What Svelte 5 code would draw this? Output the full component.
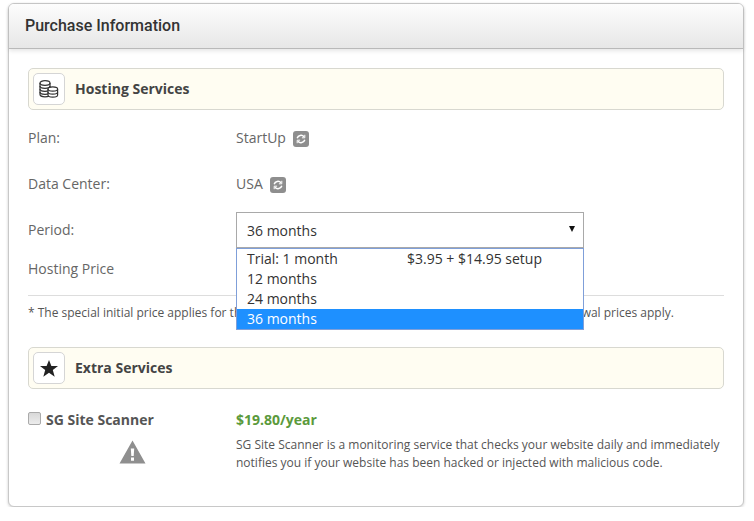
<script>
  let months = [
    { label: 'Trial: 1 month', price: '$3.95 + $14.95 setup' },
    { label: '12 months' },
    { label: '24 months' },
    { label: '36 months', active: true }
  ];
</script>

<div class="card">
  <div class="card-head">Purchase Information</div>
  <div class="card-body">
    <div class="section">
      <span class="section-icon">
        <svg width="20" height="18" viewBox="0 0 20 18" fill="#fff" stroke="#333" stroke-width="1.2">
          <path d="M1 3c0-1.300 2.300-2.300 5-2.300s5 1 5 2.300v11.500c0 1.300-2.300 2.300-5 2.300s-5-1-5-2.300z" />
          <path fill="none" d="M1 3c0 1.300 2.300 2.300 5 2.300s5-1 5-2.300M1 6c0 1.300 2.300 2.300 5 2.300s5-1 5-2.300M1 9c0 1.300 2.300 2.300 5 2.300s5-1 5-2.300M1 12c0 1.300 2.300 2.300 5 2.300s5-1 5-2.300" />
          <path d="M9 9c0-1.200 2.100-2.100 4.800-2.100s4.800.9 4.800 2.100v6c0 1.200-2.100 2.100-4.800 2.100S9 16.200 9 15z" />
          <path fill="none" d="M9 9c0 1.200 2.100 2.100 4.800 2.100s4.800-.9 4.800-2.100M9 12c0 1.200 2.100 2.100 4.800 2.100s4.800-.9 4.800-2.100" />
        </svg>
      </span>
      <h3>Hosting Services</h3>
    </div>

    <div class="row plan-row">
      <div class="label">Plan:</div>
      <div class="value">StartUp <span class="swap"><svg width="10" height="10" viewBox="0 0 10 10" fill="none" stroke="#fff" stroke-width="1.500"><path d="M1.200 4.200A3.900 3.900 0 0 1 8 2.800M8.800 5.800A3.900 3.900 0 0 1 2 7.200" /><path d="M8.800 .8v3H5.900M1.200 9.200v-3h2.900" stroke-width="1" /></svg></span></div>
    </div>
    <div class="row dc-row">
      <div class="label">Data Center:</div>
      <div class="value">USA <span class="swap"><svg width="10" height="10" viewBox="0 0 10 10" fill="none" stroke="#fff" stroke-width="1.500"><path d="M1.200 4.200A3.900 3.900 0 0 1 8 2.800M8.800 5.800A3.900 3.900 0 0 1 2 7.200" /><path d="M8.800 .8v3H5.900M1.200 9.200v-3h2.900" stroke-width="1" /></svg></span></div>
    </div>
    <div class="row period-row">
      <div class="label">Period:</div>
      <div class="select-wrap">
        <div class="select">36 months<span class="arrow"></span></div>
        <ul class="menu">
          {#each months as m}
            <li class:active={m.active}><span class="m-label">{m.label}</span>{#if m.price}<span>{m.price}</span>{/if}</li>
          {/each}
        </ul>
      </div>
    </div>
    <div class="row price-row">
      <div class="label small">Hosting Price</div>
    </div>
    <p class="note">* The special initial price applies for the first invoice only. After that initial period, the standard renewal prices apply.</p>

    <div class="section extra">
      <span class="section-icon">
        <svg width="18" height="17" viewBox="0 0 18 17"><path fill="#222" d="M9 0l2.400 6H18l-5.200 4 1.900 6.700L9 12.800l-5.700 3.900L5.200 10 0 6h6.600z" /></svg>
      </span>
      <h3>Extra Services</h3>
    </div>

    <div class="scanner">
      <div class="scanner-left">
        <label><input type="checkbox" /> SG Site Scanner</label>
        <svg class="warn" width="27" height="24" viewBox="0 0 27 24"><path fill="#8f8f8f" fill-rule="evenodd" d="M13.500 0.500L26.500 23.500H.5zM11.800 8.500l.5 7.500h2.400l.5-7.500zM12 17.500v3.200h3v-3.200z" /></svg>
      </div>
      <div class="scanner-right">
        <div class="price">$19.80/year</div>
        <p>SG Site Scanner is a monitoring service that checks your website daily and immediately notifies you if your website has been hacked or injected with malicious code.</p>
      </div>
    </div>
  </div>
</div>

<style>
  :global(body) {
    margin: 0;
    background: #fff;
    font-family: "Open Sans", sans-serif;
    color: #555;
  }

  .card {
    box-sizing: border-box;
    width: 736px;
    height: 504px;
    margin: 3px 0 0 8px;
    border: 1px solid #c8c8c8;
    border-radius: 6px;
    box-shadow: 0 1px 3px rgba(0, 0, 0, 0.2);
    background: #fff;
  }

  .card-head {
    box-sizing: border-box;
    height: 45px;
    padding: 12px 16px 0;
    border-bottom: 1px solid #b9b9b9;
    border-radius: 5px 5px 0 0;
    background: linear-gradient(#fdfdfd, #e7e7e7);
    box-shadow: 0 2px 4px rgba(0, 0, 0, 0.1);
    font-family: Roboto, sans-serif;
    font-size: 16px;
    font-weight: 500;
    line-height: 20px;
    color: #333;
  }

  .card-body {
    padding: 19px 19px 0;
  }

  .section {
    box-sizing: border-box;
    display: flex;
    align-items: center;
    height: 42px;
    padding-left: 4px;
    border: 1px solid #d8d8d0;
    border-radius: 5px;
    background: #fffdf2;
  }

  .section h3 {
    margin: 0 0 2px 10px;
    font-size: 14px;
    font-weight: 700;
    color: #444;
  }

  .section-icon {
    box-sizing: border-box;
    display: flex;
    align-items: center;
    justify-content: center;
    width: 32px;
    height: 32px;
    border: 1px solid #d5d5d5;
    border-radius: 5px;
    background: #fff;
  }

  .row {
    display: flex;
    align-items: center;
    font-size: 14px;
    line-height: 20px;
    color: #666;
  }

  .label {
    width: 208px;
  }

  .plan-row {
    margin-top: 18px;
  }

  .dc-row {
    margin-top: 26px;
  }

  .period-row {
    margin-top: 18px;
  }

  .price-row {
    margin-top: 11px;
  }

  .value {
    display: flex;
    align-items: center;
    gap: 7px;
  }

  .swap {
    display: flex;
    align-items: center;
    justify-content: center;
    width: 16px;
    height: 16px;
    margin-top: 2px;
    border-radius: 3px;
    background: #8e8e8e;
  }

  .select-wrap {
    position: relative;
    width: 348px;
  }

  .select {
    box-sizing: border-box;
    position: relative;
    height: 36px;
    padding: 8px 10px;
    border: 1px solid #a9a9a9;
    color: #333;
  }

  .arrow {
    position: absolute;
    top: 13px;
    right: 8px;
    border-top: 6px solid #111;
    border-left: 3px solid transparent;
    border-right: 3px solid transparent;
  }

  .menu {
    box-sizing: border-box;
    position: absolute;
    top: 36px;
    left: 0;
    z-index: 2;
    width: 348px;
    margin: 0;
    padding: 0;
    list-style: none;
    border: 1px solid #7f9fd9;
    background: #fff;
    color: #333;
  }

  .menu li {
    display: flex;
    height: 20px;
    padding: 0 10px;
    line-height: 20px;
  }

  .menu li.active {
    background: #1e90ff;
    color: #fff;
  }

  .m-label {
    width: 160px;
  }

  .note {
    margin: 16px 0 0;
    padding-top: 8px;
    border-top: 1px solid #ddd;
    font-size: 12px;
    line-height: 18px;
    color: #555;
    white-space: nowrap;
  }

  .extra {
    margin-top: 25px;
  }

  .scanner {
    display: flex;
    margin-top: 21px;
  }

  .scanner-left {
    display: flex;
    flex-direction: column;
    flex: 0 0 208px;
  }

  .scanner-left label {
    display: flex;
    align-items: center;
    font-size: 14px;
    font-weight: 700;
    line-height: 20px;
    color: #555;
  }

  .scanner-left input {
    appearance: none;
    box-sizing: border-box;
    width: 13px;
    height: 13px;
    margin: 0 5px 3px 0;
    border: 1px solid #aaa;
    border-radius: 2px;
    background: linear-gradient(#d8d8d8, #ececec);
  }

  .warn {
    margin: 10px 0 0 91px;
  }

  .scanner-right {
    flex: 1;
  }

  .price {
    font-size: 14px;
    font-weight: 700;
    line-height: 20px;
    color: #5b9a3c;
  }

  .scanner-right p {
    margin: 6px 0 0;
    font-size: 12px;
    line-height: 18px;
    color: #555;
  }
</style>
